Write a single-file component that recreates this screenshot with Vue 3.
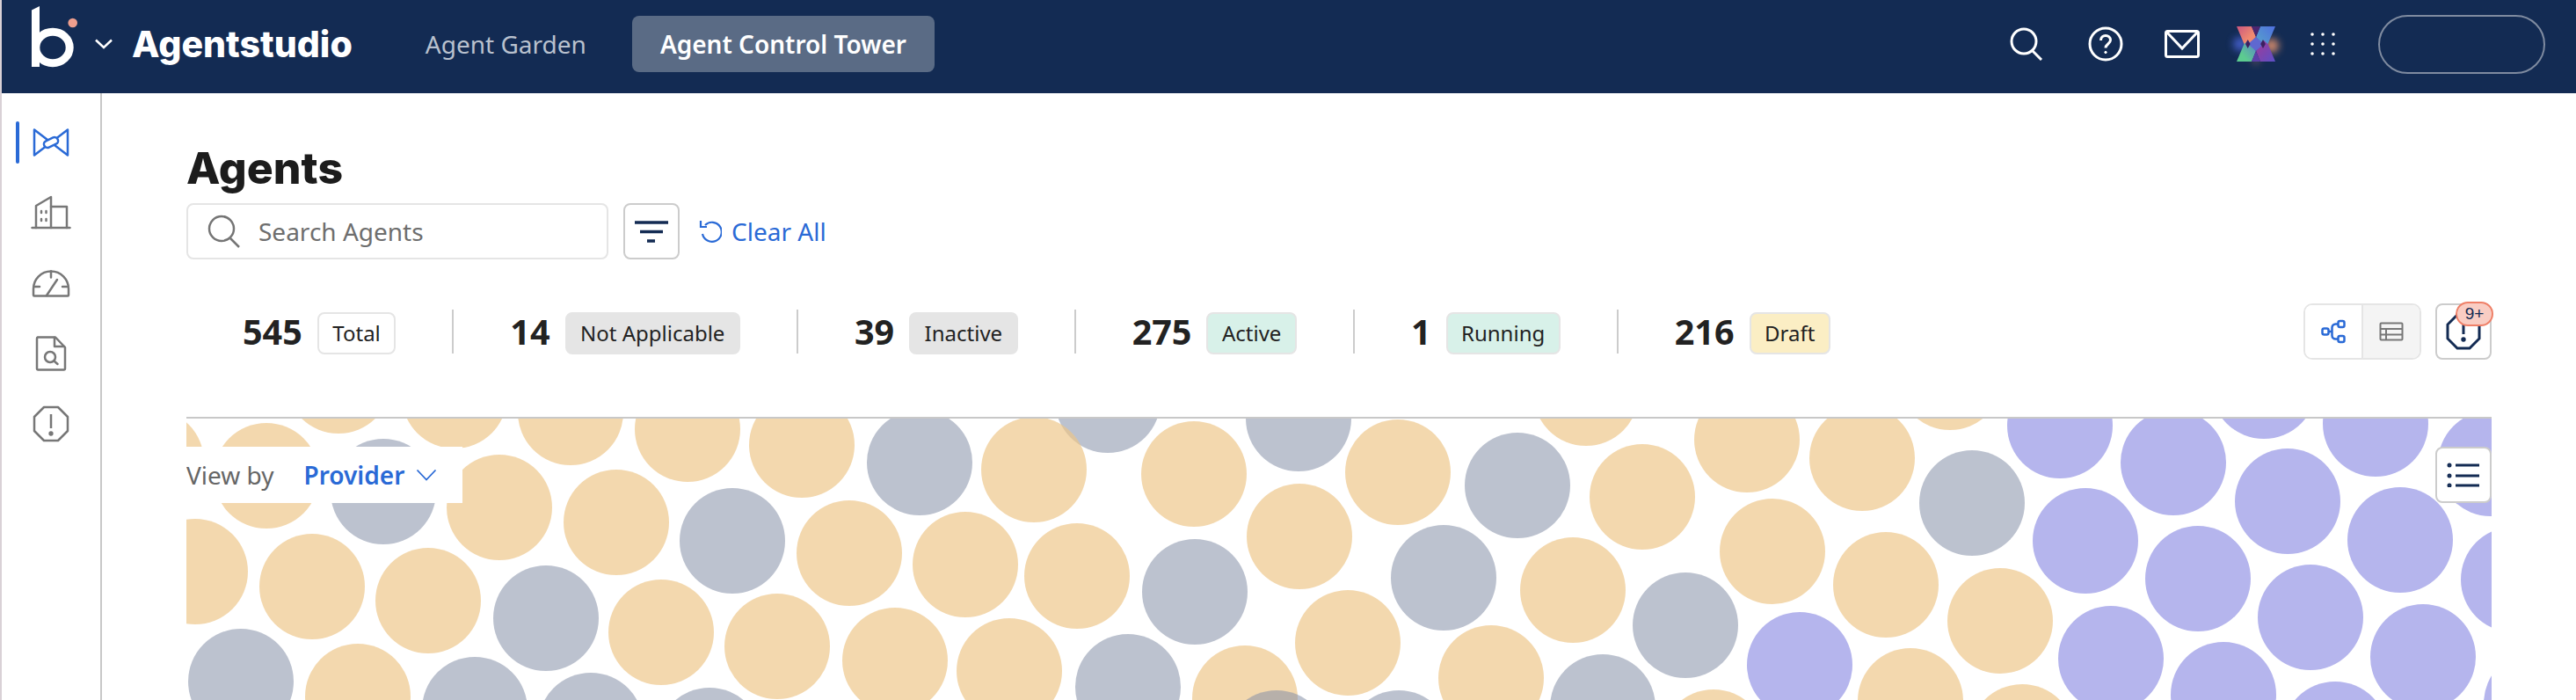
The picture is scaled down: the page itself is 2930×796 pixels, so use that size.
<template>
  <div class="app">
    <header class="topbar">
      <div class="brand">
        <svg class="logo" width="60" height="75" viewBox="0 0 60 75" fill="none">
          <path d="M6 6.500L15 2v69H6z" fill="#fff" />
          <ellipse cx="30" cy="49" rx="19.200" ry="17.700" stroke="#fff" stroke-width="9" />
          <circle cx="52.700" cy="21" r="5.300" fill="#ef9f8e" />
        </svg>
        <svg class="brand-caret" width="20" height="12" viewBox="0 0 20 12" fill="none">
          <path d="M1 1.500l9 8.500 9-8.500" stroke="#fff" stroke-width="2.500" />
        </svg>
        <span class="brand-name">Agentstudio</span>
      </div>
      <nav class="nav">
        <a class="nav-link">Agent Garden</a>
        <a class="nav-link active">Agent Control Tower</a>
      </nav>
      <div class="top-actions">
        <svg class="top-search" width="38" height="38" viewBox="0 0 38 38" fill="none" stroke="#fff" stroke-width="3">
          <circle cx="16" cy="16" r="14" />
          <path d="M26 27l10 10" />
        </svg>
        <svg class="top-help" width="40" height="40" viewBox="0 0 40 40" fill="none" stroke="#fff" stroke-width="3">
          <circle cx="20" cy="20" r="18" />
          <path d="M14.500 16c0-3.500 2.500-5.500 5.500-5.500s5.500 2 5.500 5c0 4.500-5.500 4.500-5.500 9" />
          <circle cx="20" cy="29.500" r="1.200" fill="#fff" stroke-width="1" />
        </svg>
        <svg class="top-mail" width="40" height="32" viewBox="0 0 40 32" fill="none" stroke="#fff" stroke-width="3">
          <rect x="1.500" y="1.500" width="37" height="29" rx="2" />
          <path d="M3 3l17 18L37 3" />
        </svg>
        <svg class="top-x" width="44" height="40" viewBox="0 0 44 40">
          <defs>
            <linearGradient id="xcoral" x1="0" y1="0" x2="1" y2="1">
              <stop offset="0" stop-color="#c9557f" />
              <stop offset="0.6" stop-color="#f08a70" />
            </linearGradient>
            <linearGradient id="xblue" x1="1" y1="0" x2="0" y2="1">
              <stop offset="0" stop-color="#4f6fe0" />
              <stop offset="1" stop-color="#58a8c8" />
            </linearGradient>
            <linearGradient id="xgreen" x1="1" y1="0" x2="0" y2="1">
              <stop offset="0" stop-color="#5a80cc" />
              <stop offset="0.7" stop-color="#5ccb90" />
            </linearGradient>
            <linearGradient id="xpurple" x1="0" y1="0" x2="1" y2="1">
              <stop offset="0" stop-color="#a03a98" />
              <stop offset="1" stop-color="#5c50c6" />
            </linearGradient>
            <filter id="xglow" x="-100%" y="-100%" width="300%" height="300%"><feGaussianBlur stdDeviation="4" /></filter>
          </defs>
          <circle cx="4" cy="20" r="8" fill="#4d68e0" opacity="0.8" filter="url(#xglow)" />
          <circle cx="40" cy="22" r="8" fill="#f09a70" opacity="0.85" filter="url(#xglow)" />
          <circle cx="22" cy="39" r="4" fill="#f09a70" opacity="0.4" filter="url(#xglow)" />
          <polygon points="0,0 17,0 22,12 13,24 8.500,20" fill="url(#xcoral)" />
          <polygon points="27,0 44,0 35.500,20 31,24 22,12" fill="url(#xblue)" />
          <polygon points="0,40 8.500,20 13,16 22,28 17,40" fill="url(#xgreen)" />
          <polygon points="44,40 35.500,20 31,16 22,28 27,40" fill="url(#xpurple)" />
          <polygon points="17,0 27,0 22,12" fill="#4a2670" />
          <polygon points="22,12 31,20 22,28 13,20" fill="#5f68d0" />
          <polygon points="17,40 27,40 22,28" fill="#5b3fa8" />
          <polygon points="12.700,15 15.500,20 12.700,25 10,20" fill="#3d2060" />
          <polygon points="30,15 32.800,20 30,25 27.200,20" fill="#3d2060" />
        </svg>
        <svg class="top-grid" width="28" height="26" viewBox="0 0 28 26" fill="#fff">
          <circle v-for="d in gridDots" :key="d.id" :cx="d.x" :cy="d.y" r="1.800" />
        </svg>
        <div class="user-pill"></div>
      </div>
    </header>

    <div class="body">
      <aside class="sidebar">
        <div class="side-item active">
          <svg width="42" height="34" viewBox="0 0 42 34" fill="none" stroke="#2a6ad6" stroke-width="2.500" stroke-linejoin="round">
            <path d="M2 2.500l38 29v-29L2 31.500z" />
            <rect x="12.500" y="13" width="17" height="8" rx="4" fill="#fff" transform="rotate(-25 21 17)" />
          </svg>
        </div>
        <div class="side-item">
          <svg width="46" height="40" viewBox="0 0 46 40" fill="none" stroke="#777" stroke-width="2.500" stroke-linejoin="round" stroke-linecap="round">
            <path d="M1.500 37h43" />
            <path d="M6 37V12L23 2v35" />
            <path d="M23 13h18v24" />
            <path d="M12 18v2M17.500 18v2M12 27v2M17.500 27v2" />
          </svg>
        </div>
        <div class="side-item">
          <svg width="44" height="32" viewBox="0 0 44 32" fill="none" stroke="#777" stroke-width="2.500" stroke-linecap="round" stroke-linejoin="round">
            <path d="M2 29.500v-7a20 20 0 0 1 40 0v7a1 1 0 0 1-1 1H3a1 1 0 0 1-1-1z" />
            <path d="M22 2.500v7M2.500 20H9M35 20h6.500M17 30l12-18" />
          </svg>
        </div>
        <div class="side-item">
          <svg width="36" height="40" viewBox="0 0 36 40" fill="none" stroke="#777" stroke-width="2.500" stroke-linejoin="round" stroke-linecap="round">
            <path d="M3 1.500h20L34 13v24a1.500 1.500 0 0 1-1.500 1.500h-29A1.500 1.500 0 0 1 2 37V3a1.500 1.500 0 0 1 1-1.500z" />
            <path d="M22 2v10h11" />
            <circle cx="17" cy="24" r="6" />
            <path d="M21.500 28.500l4 3.500" />
          </svg>
        </div>
        <div class="side-item">
          <svg width="42" height="42" viewBox="0 0 42 42" fill="none" stroke="#777" stroke-width="2.500">
            <path d="M13 2h16l11 11v16L29 40H13L2 29V13z" stroke-linejoin="round" />
            <path d="M21 10v16" />
            <circle cx="21" cy="32" r="1.400" fill="#777" />
          </svg>
        </div>
      </aside>

      <main class="page">
        <h1 class="title">Agents</h1>
        <div class="toolbar">
          <label class="search">
            <svg width="38" height="38" viewBox="0 0 38 38" fill="none" stroke="#757575" stroke-width="2.500">
              <circle cx="16" cy="16" r="14" />
              <path d="M26 27l10 10" />
            </svg>
            <span class="placeholder">Search Agents</span>
          </label>
          <button class="filter-btn">
            <svg width="40" height="26" viewBox="0 0 40 26" fill="none" stroke="#132b53" stroke-width="3.500">
              <path d="M1 3h38M7 13.500h26M15 24h9" />
            </svg>
          </button>
          <a class="clear">
            <svg width="26" height="28" viewBox="0 0 26 28" fill="none" stroke="#2a6ad6" stroke-width="2.200">
              <path d="M6 8a11 11 0 1 1-3 10" transform="translate(1 -1)" />
              <path d="M2 2v7h7" />
            </svg>
            Clear All
          </a>
        </div>

        <div class="stats-row">
          <div class="stats">
            <div v-for="s in stats" :key="s.label" class="stat">
              <span class="stat-num">{{ s.count }}</span>
              <span class="chip" :class="s.tone">{{ s.label }}</span>
            </div>
          </div>
          <div class="view-tools">
            <div class="segmented">
              <button class="seg on">
                <svg width="28" height="28" viewBox="0 0 28 28" fill="none" stroke="#2a6ad6" stroke-width="2.500" stroke-linejoin="round">
                  <rect x="1.500" y="10.500" width="7" height="7" rx="2" />
                  <rect x="19.500" y="2" width="7" height="7" rx="2" />
                  <rect x="19.500" y="19" width="7" height="7" rx="2" />
                  <path d="M8.500 14h4M19.500 5.500h-3a4 4 0 0 0-4 4v9a4 4 0 0 0 4 4h3" />
                </svg>
              </button>
              <button class="seg">
                <svg width="28" height="22" viewBox="0 0 28 22" fill="none" stroke="#777" stroke-width="2">
                  <rect x="1.500" y="1.500" width="25" height="19" rx="1" />
                  <path d="M1.500 8h25M1.500 14.500h25M8 8v12.500" />
                </svg>
              </button>
            </div>
            <button class="alert-btn">
              <svg width="40" height="42" viewBox="0 0 40 42" fill="none" stroke="#132b53" stroke-width="3">
                <path d="M13 2h14l11 11v16L27 40H13L2 29V13z" />
                <path d="M20 10v14" />
                <circle cx="20" cy="30" r="1.200" fill="#132b53" />
              </svg>
              <span class="badge">9+</span>
            </button>
          </div>
        </div>

        <section class="chart">
          <svg class="bubbles" viewBox="212 476 2622 320">
            <circle v-for="(c, i) in bubbles" :key="i" :cx="c[0]" :cy="c[1]" r="60" :class="c[2]" />
          </svg>
          <div class="view-by">
            <span class="view-label">View by</span>
            <span class="view-value">Provider</span>
            <svg width="24" height="14" viewBox="0 0 24 14" fill="none" stroke="#2a6ad6" stroke-width="1.800">
              <path d="M1.500 1.500L12 12.500 22.500 1.500" />
            </svg>
          </div>
          <button class="list-btn">
            <svg width="38" height="28" viewBox="0 0 38 28" fill="none" stroke="#132b53" stroke-width="3">
              <circle cx="3" cy="3" r="1" fill="#132b53" />
              <circle cx="3" cy="15" r="1" fill="#132b53" />
              <circle cx="3" cy="26" r="1" fill="#132b53" />
              <path d="M10 3h27M10 15h27M10 26h27" />
            </svg>
          </button>
        </section>
      </main>
    </div>
  </div>
</template>

<script setup>
const stats = [
  { count: 545, label: 'Total', tone: 'plain' },
  { count: 14, label: 'Not Applicable', tone: 'muted' },
  { count: 39, label: 'Inactive', tone: 'muted' },
  { count: 275, label: 'Active', tone: 'green' },
  { count: 1, label: 'Running', tone: 'green' },
  { count: 216, label: 'Draft', tone: 'yellow' }
]

const gridDots = []
for (let r = 0; r < 3; r++) {
  for (let c = 0; c < 3; c++) {
    gridDots.push({ id: `${r}-${c}`, x: 2 + c * 12, y: 2 + r * 11 })
  }
}

// provider bubbles, [x, y, group] read off the chart
const bubbles = [
  [172, 525, 't'], [303, 541, 't'], [385, 433, 't'], [517, 450, 't'], [649, 469, 't'], [782, 488, 't'], [912, 506, 't'],
  [436, 559, 'g'], [568, 577, 't'], [701, 594, 't'], [833, 615, 'g'], [966, 629, 't'], [1098, 642, 't'],
  [222, 650, 't'], [355, 667, 't'], [487, 683, 't'], [621, 703, 'g'], [752, 719, 't'], [884, 735, 't'], [1018, 751, 't'],
  [274, 775, 'g'], [407, 792, 't'], [540, 807, 'g'], [672, 825, 'g'], [807, 842, 'g'],
  [1260, 455, 'g'], [1176, 534, 't'], [1046, 526, 'g'], [1358, 539, 't'], [1477, 476, 'g'], [1590, 537, 't'],
  [1726, 552, 'g'], [1804, 447, 't'], [1868, 565, 't'],
  [1225, 655, 't'], [1359, 673, 'g'], [1478, 610, 't'], [1533, 731, 't'], [1642, 657, 'g'], [1789, 671, 't'], [1917, 711, 'g'],
  [1148, 763, 't'], [1283, 781, 'g'], [1416, 794, 't'], [1452, 845, 'g'], [1696, 771, 't'], [1591, 845, 'g'], [1823, 804, 'g'], [1949, 844, 't'],
  [1987, 500, 't'], [2118, 521, 't'], [2218, 429, 't'], [2243, 572, 'g'], [2016, 627, 't'], [2145, 665, 't'], [2275, 706, 't'],
  [2173, 797, 't'], [2300, 838, 't'],
  [2343, 484, 'p'], [2472, 526, 'p'], [2575, 439, 'p'], [2702, 482, 'p'], [2602, 570, 'p'], [2833, 527, 'p'],
  [2372, 615, 'p'], [2730, 614, 'p'], [2500, 658, 'p'], [2628, 702, 'p'], [2859, 659, 'p'], [2401, 749, 'p'],
  [2047, 756, 'p'], [2756, 747, 'p'], [2529, 790, 'p'], [2656, 835, 'p'], [2885, 800, 'p']
]
</script>

<style>
html,
body {
  margin: 0;
  background: #fff;
  overflow: hidden;
}
</style>

<style scoped>
.app {
  width: 2930px;
  height: 796px;
  box-sizing: border-box;
  border-left: 2px solid #d9d1d6;
  display: flex;
  flex-direction: column;
  font-family: "Noto Sans", "Liberation Sans", sans-serif;
  color: #1c1c1c;
  overflow: hidden;
}

.topbar {
  height: 106px;
  box-sizing: border-box;
  flex: none;
  display: flex;
  align-items: center;
  background: #132b53;
  padding: 0 35px 6px 28px;
}

.brand {
  display: flex;
  align-items: center;
}

.logo {
  margin-top: -15px;
}

.brand-caret {
  margin-left: 18px;
}

.brand-name {
  margin-left: 22px;
  font-family: Inter, "Noto Sans", sans-serif;
  font-size: 41px;
  font-weight: 800;
  color: #fff;
}

.nav {
  display: flex;
  align-items: center;
  margin-left: 51px;
}

.nav-link {
  height: 64px;
  padding: 0 32px;
  display: flex;
  align-items: center;
  border-radius: 8px;
  font-size: 28px;
  color: #b9c1ce;
}

.nav-link.active {
  margin-left: 20px;
  background: #5a6b85;
  color: #fff;
  font-weight: 600;
}

.top-actions {
  margin-left: auto;
  display: flex;
  align-items: center;
}

.top-search {
  margin-right: 51px;
}

.top-help {
  margin-right: 47px;
}

.top-mail {
  margin-right: 42px;
}

.top-x {
  margin-right: 40px;
  overflow: visible;
}

.top-grid {
  margin-right: 49px;
}

.user-pill {
  width: 190px;
  height: 67px;
  box-sizing: border-box;
  border: 2px solid #7f8ba0;
  border-radius: 34px;
}

.body {
  flex: 1;
  display: flex;
  min-height: 0;
}

.sidebar {
  width: 114px;
  flex: none;
  box-sizing: border-box;
  border-right: 2px solid #c8c8c8;
  padding-top: 32px;
  display: flex;
  flex-direction: column;
  align-items: center;
  gap: 32px;
}

.side-item {
  position: relative;
  height: 48px;
  display: flex;
  align-items: center;
  justify-content: center;
}

.side-item.active::before {
  content: "";
  position: absolute;
  left: -19px;
  top: 0;
  width: 4px;
  height: 48px;
  border-radius: 2px;
  background: #2a6ad6;
}

.page {
  flex: 1;
  min-width: 0;
  padding: 0 96px;
  display: flex;
  flex-direction: column;
}

.title {
  margin: 53px 0 0;
  height: 72px;
  line-height: 64px;
  font-family: Inter, "Noto Sans", sans-serif;
  font-size: 50px;
  font-weight: 800;
  color: #1c1c1c;
}

.toolbar {
  display: flex;
  align-items: center;
  height: 64px;
}

.search {
  width: 480px;
  height: 64px;
  box-sizing: border-box;
  border: 2px solid #e5e5e5;
  border-radius: 8px;
  padding-left: 22px;
  display: flex;
  align-items: center;
  gap: 20px;
}

.placeholder {
  font-size: 28px;
  color: #6e6e6e;
}

.filter-btn {
  width: 64px;
  height: 64px;
  margin-left: 17px;
  padding: 0;
  box-sizing: border-box;
  border: 2px solid #ccc;
  border-radius: 8px;
  background: #fff;
  display: flex;
  align-items: center;
  justify-content: center;
}

.clear {
  margin-left: 22px;
  display: flex;
  align-items: center;
  gap: 11px;
  font-size: 28px;
  color: #2a6ad6;
}

.stats-row {
  margin-top: 50px;
  display: flex;
  align-items: flex-start;
  justify-content: space-between;
  height: 129px;
}

.stats {
  display: flex;
  align-items: center;
  margin-top: 7px;
}

.stat {
  height: 50px;
  padding: 0 64px;
  display: flex;
  align-items: center;
  gap: 17px;
  border-right: 2px solid #ccc;
}

.stat:last-child {
  border-right: 0;
}

.stat-num {
  font-size: 39.500px;
  font-weight: 700;
  color: #222;
}

.chip {
  height: 48px;
  margin-top: 3px;
  box-sizing: border-box;
  padding: 0 15.500px;
  display: flex;
  align-items: center;
  border: 2px solid #e5e5e5;
  border-radius: 8px;
  font-size: 24px;
  color: #222;
}

.chip.plain {
  background: #fff;
}

.chip.muted {
  background: #e5e5e5;
}

.chip.green {
  background: #d8f1e9;
}

.chip.yellow {
  background: #fbeec4;
}

.view-tools {
  display: flex;
  gap: 16px;
}

.segmented {
  display: flex;
  width: 134px;
  height: 64px;
  box-sizing: border-box;
  border: 2px solid #e5e5e5;
  border-radius: 10px;
  overflow: hidden;
}

.seg {
  flex: 1;
  padding: 0;
  border: 0;
  background: #f4f4f4;
  display: flex;
  align-items: center;
  justify-content: center;
}

.seg.on {
  background: #fff;
  border-right: 2px solid #e5e5e5;
}

.alert-btn,
.list-btn {
  width: 64px;
  height: 64px;
  padding: 0;
  box-sizing: border-box;
  border: 2px solid #ccc;
  border-radius: 8px;
  background: #fff;
  display: flex;
  align-items: center;
  justify-content: center;
}

.alert-btn {
  position: relative;
}

.badge {
  position: absolute;
  top: -4px;
  left: 21px;
  width: 43px;
  height: 28px;
  box-sizing: border-box;
  border: 2px solid #ef8068;
  border-radius: 14px;
  background: #f9cdc3;
  display: flex;
  align-items: center;
  justify-content: center;
  font-family: "Liberation Sans", sans-serif;
  font-size: 19px;
  color: #132b53;
}

.chart {
  position: relative;
  flex: 1;
  min-height: 0;
  border-top: 2px solid #c8c8c8;
  overflow: hidden;
}

.bubbles {
  display: block;
  width: 2622px;
  height: 320px;
}

.bubbles .t {
  fill: #edc586;
  fill-opacity: 0.67;
}

.bubbles .g {
  fill: #8590a8;
  fill-opacity: 0.55;
}

.bubbles .p {
  fill: #b5b5ed;
}

.view-by {
  position: absolute;
  top: 32px;
  left: 0;
  width: 314px;
  height: 64px;
  box-sizing: border-box;
  background: #fff;
  display: flex;
  align-items: center;
  font-size: 28px;
}

.view-label {
  color: #666;
}

.view-value {
  margin-left: 34px;
  margin-right: 13px;
  font-weight: 600;
  color: #2a6ad6;
}

.list-btn {
  position: absolute;
  top: 32px;
  right: 0;
}
</style>
